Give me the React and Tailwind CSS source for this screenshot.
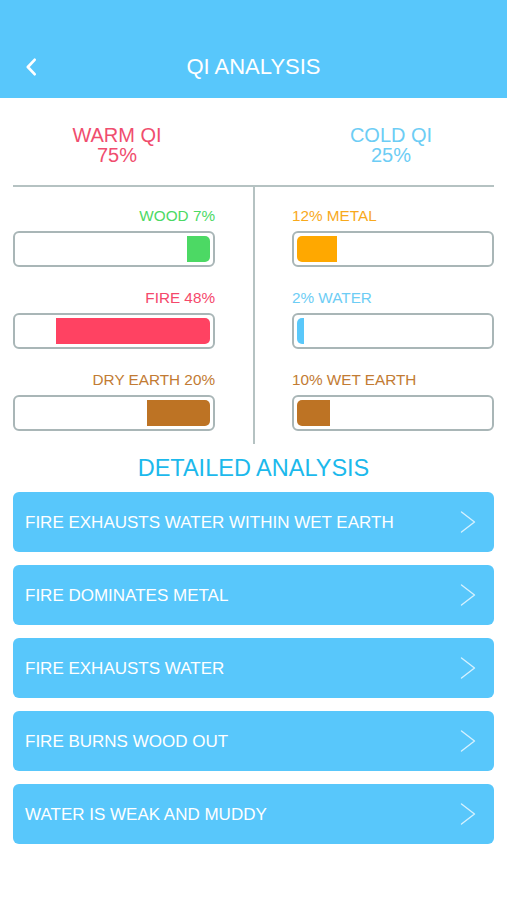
import React from 'react';

const font = { fontFamily: '"Liberation Sans", Arial, sans-serif' };

const warm = [
  { label: 'WOOD 7%', fill: 'w-[23px] bg-[#4cd964]', text: 'text-[#4cd964]' },
  { label: 'FIRE 48%', fill: 'w-[154px] bg-[#ff4262]', text: 'text-[#f5486b]' },
  { label: 'DRY EARTH 20%', fill: 'w-[63px] bg-[#bd7324]', text: 'text-[#c27b33]' },
];

const cold = [
  { label: '12% METAL', fill: 'w-[40px] bg-[#ffa800]', text: 'text-[#f8a91c]' },
  { label: '2% WATER', fill: 'w-[7px] bg-[#5ac8fa]', text: 'text-[#6dcdf5]' },
  { label: '10% WET EARTH', fill: 'w-[33px] bg-[#bd7324]', text: 'text-[#c27b33]' },
];

const items = [
  'FIRE EXHAUSTS WATER WITHIN WET EARTH',
  'FIRE DOMINATES METAL',
  'FIRE EXHAUSTS WATER',
  'FIRE BURNS WOOD OUT',
  'WATER IS WEAK AND MUDDY',
];

function Bar({ item, side }) {
  const left = side === 'left';
  return (
    <div className="flex flex-col">
      <div className={`text-[15.3px] leading-[18px] h-[18px] ${item.text} ${left ? 'text-right' : 'text-left'}`}>
        {item.label}
      </div>
      <div className={`mt-[6px] h-[36px] rounded-[6px] border-2 border-[#a9b6b7] p-[3px] flex ${left ? 'justify-end' : 'justify-start'}`}>
        <div className={`h-full ${item.fill} ${left ? 'rounded-r-[5px]' : 'rounded-l-[5px]'}`} />
      </div>
    </div>
  );
}

function Chevron({ className, strokeWidth = 1.4 }) {
  return (
    <svg viewBox="0 0 16 22" className={className} fill="none" stroke="currentColor" strokeWidth={strokeWidth} strokeLinecap="round" strokeLinejoin="round">
      <path d="M1.5 1 L14.5 11 L1.5 21" />
    </svg>
  );
}

export default function App() {
  return (
    <div className="w-[507px] h-[900px] bg-white" style={font}>
      <div className="h-[98px] bg-[#58c7fb] relative flex items-end justify-center pb-[19px]">
        <svg viewBox="0 0 12 20" className="absolute left-[25px] top-[58px] w-[12px] h-[18px] text-white" fill="none" stroke="currentColor" strokeWidth="3" strokeLinecap="round" strokeLinejoin="round">
          <path d="M10 2 L2.5 10 L10 18" />
        </svg>
        <div className="text-white text-[22px] leading-[24px]">QI ANALYSIS</div>
      </div>

      <div className="flex pt-[27px] h-[87px]">
        <div className="w-[234px] text-center text-[20px] leading-[20px] text-[#f04d6e]">
          <div>WARM QI</div>
          <div>75%</div>
        </div>
        <div className="w-[46px]" />
        <div className="w-[222px] text-center text-[20px] leading-[20px] text-[#6dcdf5]">
          <div>COLD QI</div>
          <div>25%</div>
        </div>
      </div>

      <div className="mx-[13px] h-[2px] bg-[#b5c2c2]" />

      <div className="mx-[13px] flex">
        <div className="w-[202px] flex flex-col gap-[22px] pt-[20px] pb-[13px]">
          {warm.map((w) => (
            <Bar key={w.label} item={w} side="left" />
          ))}
        </div>
        <div className="w-[38px]" />
        <div className="w-[2px] bg-[#b5c2c2]" />
        <div className="w-[37px]" />
        <div className="w-[202px] flex flex-col gap-[22px] pt-[20px] pb-[13px]">
          {cold.map((c) => (
            <Bar key={c.label} item={c} side="right" />
          ))}
        </div>
      </div>

      <div className="mt-[10px] text-center text-[23.5px] leading-[28px] text-[#1cb9ec]">DETAILED ANALYSIS</div>

      <div className="mx-[13px] mt-[10px] flex flex-col gap-[13px]">
        {items.map((t) => (
          <div key={t} className="h-[60px] rounded-[6px] bg-[#58c7fb] flex items-center justify-between pl-[12px] pr-[18px]">
            <span className="text-white text-[17px] leading-[20px] pt-[1px]">{t}</span>
            <Chevron className="w-[16px] h-[22px] text-white/75" />
          </div>
        ))}
      </div>
    </div>
  );
}
